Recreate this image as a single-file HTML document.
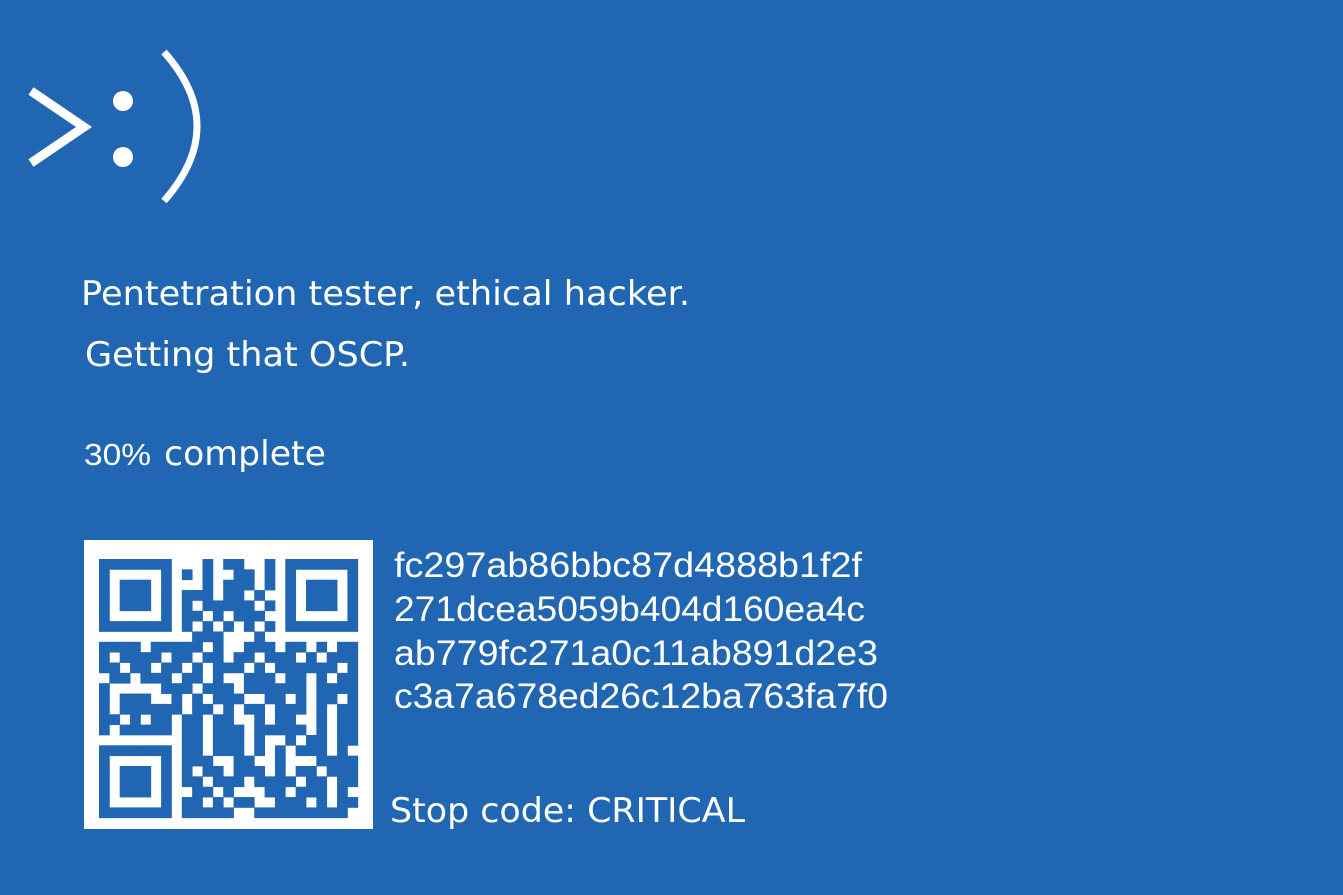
<!DOCTYPE html>
<html><head><meta charset="utf-8"><style>
html,body{margin:0;padding:0;background:#2166b2;width:1343px;height:895px;overflow:hidden}
svg{display:block}
.d{font-family:"DejaVu Sans","Liberation Sans",sans-serif;fill:#fff}
.l{font-family:"Liberation Sans",sans-serif;fill:#fff}
</style></head><body>
<svg width="1343" height="895" viewBox="0 0 1343 895" xmlns="http://www.w3.org/2000/svg">
<rect width="1343" height="895" fill="#2166b2"/>
<polyline points="31,91 84,127 31,163" fill="none" stroke="#fff" stroke-width="9"/>
<circle cx="123" cy="101" r="10" fill="#fff"/>
<circle cx="123" cy="157" r="10" fill="#fff"/>
<path d="M164,52 Q230,126 164,201" fill="none" stroke="#fff" stroke-width="7"/>
<text class="d" x="81" y="305" font-size="34" textLength="609" lengthAdjust="spacingAndGlyphs">Pentetration tester, ethical hacker.</text>
<text class="d" x="85" y="366" font-size="34" textLength="325" lengthAdjust="spacingAndGlyphs">Getting that OSCP.</text>
<text class="l" x="84" y="465" font-size="31" textLength="67" lengthAdjust="spacingAndGlyphs">30%</text>
<text class="d" x="164" y="465" font-size="34" textLength="162" lengthAdjust="spacingAndGlyphs">complete</text>
<text class="l" x="394" y="577" font-size="35" textLength="468" lengthAdjust="spacingAndGlyphs">fc297ab86bbc87d4888b1f2f</text>
<text class="l" x="394" y="621" font-size="35" textLength="471" lengthAdjust="spacingAndGlyphs">271dcea5059b404d160ea4c</text>
<text class="l" x="394" y="665" font-size="35" textLength="484" lengthAdjust="spacingAndGlyphs">ab779fc271a0c11ab891d2e3</text>
<text class="l" x="394" y="708" font-size="35" textLength="494" lengthAdjust="spacingAndGlyphs">c3a7a678ed26c12ba763fa7f0</text>
<text class="d" x="390" y="822" font-size="34" textLength="355" lengthAdjust="spacingAndGlyphs">Stop code: CRITICAL</text>
<rect x="84" y="540" width="289" height="289" fill="#fff"/>
<g id="qr" fill="#2166b2"></g>
</svg>
<script>
var rows=[
"1111111000101100101111111",
"1000001010100110101000001",
"1011101000101110101011101",
"1011101011101101001011101",
"1011101010111110101011101",
"1000001011010111001000001",
"1111111010101010101111111",
"0000000001110001000000000",
"1111011111010011101101011",
"1011110110110110111010111",
"1101101101011101011111101",
"0110111011010011101101011",
"1000001110111011111101111",
"1011100101011100110101101",
"1011111101101011011101011",
"1101011011011001011001011",
"1011111011011101111101011",
"0000000011011101001011011",
"1111111011011101010111010",
"1000001011100110010001111",
"1011101010110111010110111",
"1011101011011101111011011",
"1011101001101000110111010",
"1000001011010110011101011",
"1111111011111001111111110"];
var g=document.getElementById('qr'),s=10.35,ox=99,oy=559,h='';
for(var r=0;r<rows.length;r++)for(var c=0;c<25;c++)if(rows[r][c]=='1'){
h+='<rect x="'+(ox+c*s).toFixed(2)+'" y="'+(oy+r*s).toFixed(2)+'" width="'+(s+0.4)+'" height="'+(s+0.4)+'"/>';}
g.innerHTML=h;
</script>
</body></html>
